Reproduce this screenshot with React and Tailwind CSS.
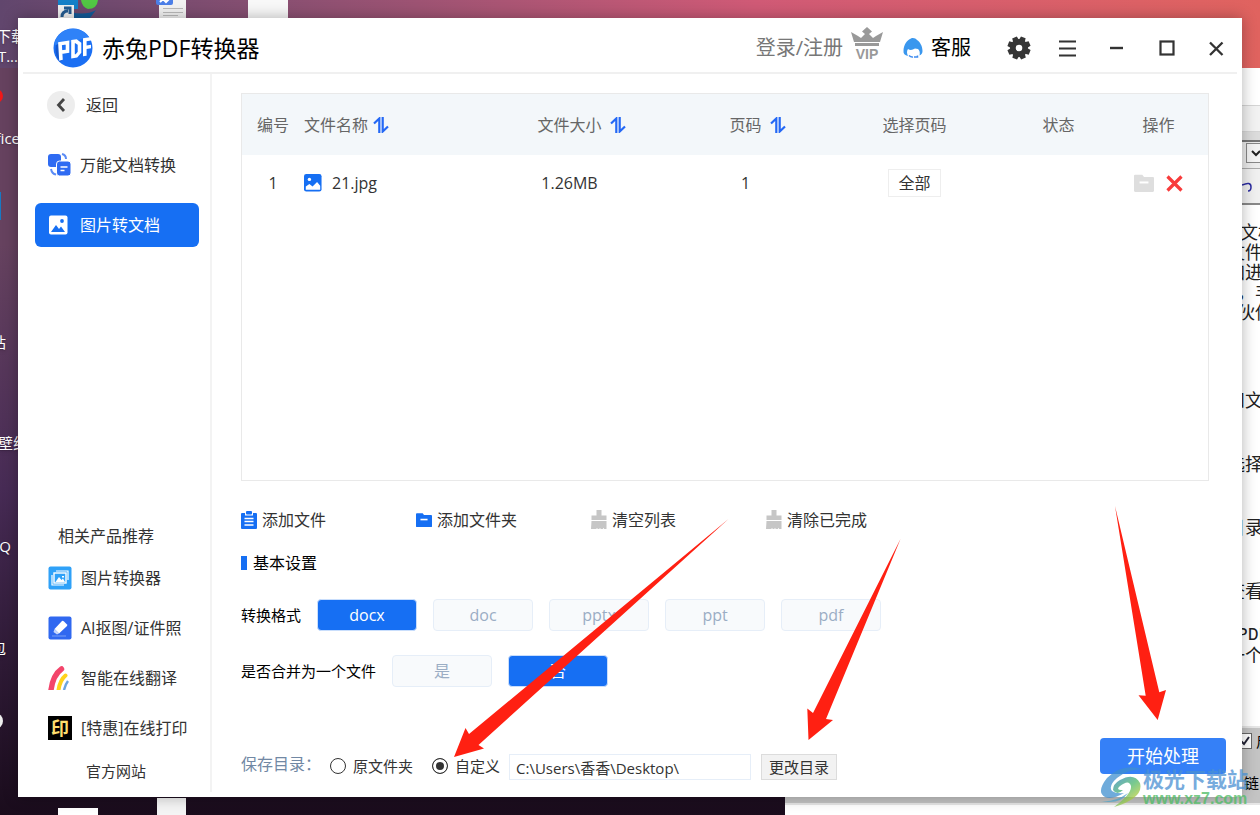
import React, { useState } from "react";

const FONT = "font-['Open_Sans','Noto_Sans_CJK_SC',sans-serif]";

const products = [
  { name: "图片转换器", Icon: PhotoIcon },
  { name: "AI抠图/证件照", Icon: EraserIcon },
  { name: "智能在线翻译", Icon: RainbowIcon },
  { name: "[特惠]在线打印", Icon: PrintIcon }
];

const formats = ["docx", "doc", "pptx", "ppt", "pdf"];

const files = [{ id: 1, name: "21.jpg", size: "1.26MB", pages: 1, range: "全部" }];

// left edge of the desktop, labels are cut by the window
const desktopLabels = [
  { text: "下载", className: "top-[26px] right-[-8px]" },
  { text: "T...", className: "top-[46px] right-0" },
  { text: "Office", className: "top-[128px] right-[-2px]" },
  { text: "站", className: "top-[332px] right-[12px]" },
  { text: "壁纸", className: "top-[433px] right-[-10px]" },
  { text: "QQ", className: "top-[536px] right-[7px]" },
  { text: "包", className: "top-[638px] right-[12px]" }
];

const docLines = [
  { text: "文档", className: "top-[222px] left-[1240px]" },
  { text: "文件", className: "top-[242px] left-[1227px]" },
  { text: "加进", className: "top-[262px] left-[1227px]" },
  { text: "，丰", className: "top-[282px] left-[1237px]" },
  { text: "伙伴", className: "top-[302px] left-[1237px]" },
  { text: "和文", className: "top-[390px] left-[1227px]" },
  { text: "选择", className: "top-[454px] left-[1227px]" },
  { text: "目录", className: "top-[517px] left-[1227px]" },
  { text: "查看", className: "top-[581px] left-[1227px]" },
  { text: "PDF", className: "top-[625px] left-[1237px] font-['Liberation_Mono',monospace]" },
  { text: "一个", className: "top-[645px] left-[1227px]" }
];

function Logo() {
  return (
    <svg width="40" height="40" viewBox="0 0 40 40">
      <circle cx="20" cy="20" r="19.5" fill="#1b6ff3" />
      <path d="M1 16 A19.5 19.5 0 0 1 36 9 L22 13 L4 18 Z" fill="#2f82f8" />
      <path d="M3 17 L7 15 L10 31 L7 34 Q1 27 3 17 Z" fill="#1458cf" />
      <g transform="skewY(-9)" fill="none" stroke="#fff" strokeWidth="3.6">
        <path d="M8 33.500 L7 16.800 H14.500 V25.500 H8.500" />
        <path d="M20 31.500 V16.800 H23 L26.500 20 V28.500 L23.500 31.500 Z" />
        <path d="M31.800 33 V16.800 H39.500 M32 24.500 H38" />
      </g>
    </svg>
  );
}

function VipIcon() {
  return (
    <svg width="32" height="34" viewBox="0 0 32 34">
      <g fill="#999">
        <path d="M0 5 L7 9 L10 11 L14 7 L11 4.500 L16 0 L21 4.500 L18 7 L22 11 L25 9 L32 5 L29 15 H3 Z" />
        <rect x="4" y="16" width="24" height="3" />
      </g>
      <text x="16" y="32" textAnchor="middle" fontSize="14" fontWeight="700" fill="#999" fontFamily="Liberation Sans">VIP</text>
    </svg>
  );
}

function ServiceIcon() {
  return (
    <svg width="20" height="22" viewBox="0 0 20 22">
      <path d="M0.500 14 C0.500 8 4 3 8 1.500 C10 0.500 13 1.500 14 3 C17 5 19.500 9 19.500 14 Q19.500 17 16.500 18.500 Q17.500 14 15 12 L12 11.500 Q8 14 5 12 Q3 15 5 19 Q0 18 0.500 14 Z" fill="#3a97ee" />
      <path d="M6 18.500 Q8 20.500 10 20 M14.500 18.500 V20 H11" fill="none" stroke="#3f8cf0" strokeWidth="1.500" />
    </svg>
  );
}

function GearIcon() {
  return (
    <svg width="24" height="24" viewBox="0 0 24 24">
      <g fill="#363636">
        {[0, 45, 90, 135, 180, 225, 270, 315].map(a => (
          <path key={a} d="M8.800 5 L9.500 0.500 H14.500 L15.200 5 Z" transform={`rotate(${a + 22} 12 12)`} />
        ))}
        <circle cx="12" cy="12" r="9" />
      </g>
      <circle cx="12" cy="12" r="3.300" fill="#fff" />
    </svg>
  );
}

function DocsIcon() {
  return (
    <svg width="24" height="24" viewBox="0 0 24 24">
      <rect x="0" y="1" width="13" height="13" rx="3" fill="#2f6bf2" />
      <rect x="8.500" y="8" width="14.500" height="15" rx="3" fill="#2f6bf2" stroke="#fff" strokeWidth="1" />
      <path d="M12.500 14 H19.500 M12.500 17.500 H16.500" stroke="#fff" strokeWidth="1.600" />
      <path d="M14 1 Q18 2 18 6 M3 16 Q4 21 8 21.500" fill="none" stroke="#5c8cf5" strokeWidth="2" />
    </svg>
  );
}

function ImageIcon({ size, color, inner }) {
  return (
    <svg width={size} height={size} viewBox="0 0 20 20">
      <rect x="0" y="0" width="19.500" height="19.500" rx="2.500" fill={color} />
      <circle cx="6" cy="6" r="1.900" fill={inner} />
      <path d="M2 17.500 V14 L6 11 L9.500 14 L14.500 9 L18 13 V17.500 Z" fill={inner} />
    </svg>
  );
}

function WhiteImageIcon() {
  return (
    <svg width="20" height="20" viewBox="0 0 20 20">
      <rect x="1" y="0.500" width="18.500" height="19" rx="2" fill="#fff" />
      <circle cx="14" cy="6" r="1.900" fill="#166ff3" />
      <path d="M3 17 L8 10 L11 14 L13 11.500 L17 17 Z" fill="#166ff3" />
    </svg>
  );
}

function PhotoIcon() {
  return (
    <svg width="24" height="24" viewBox="0 0 24 24">
      <rect x="0.500" y="0.500" width="23" height="23" rx="2" fill="#2fa1f8" />
      <path d="M8 5 H20 V14 M4 9 V19 H16" fill="none" stroke="#fff" strokeWidth="1.200" />
      <rect x="6" y="7" width="12" height="10" fill="none" stroke="#fff" strokeWidth="1.400" />
      <path d="M7.500 16 L11 11 L13.500 14 L15 12.500 L17 16 Z M14 10 h2 v1.500 h-2 Z" fill="#fff" />
    </svg>
  );
}

function EraserIcon() {
  return (
    <svg width="24" height="24" viewBox="0 0 24 24">
      <rect x="0.500" y="0.500" width="23" height="23" rx="2" fill="#3068f0" />
      <path d="M6.500 13 L14 5 Q15 4.500 16 5.500 L19 8.500 Q19.500 9.500 19 10 L11 17.500 Z" fill="#fff" />
      <path d="M6.500 13 L11 17.500 L9 18.500 L5.500 16 Z" fill="#c6d6fb" />
      <path d="M4 20 H18" stroke="#6d98f6" strokeWidth="1.200" />
    </svg>
  );
}

function RainbowIcon() {
  return (
    <svg width="24" height="24" viewBox="0 0 24 24" fill="none">
      <path d="M3 24 Q5 9 13.500 3" stroke="#f3456b" strokeWidth="5.500" strokeLinecap="round" />
      <path d="M10.500 24 Q12 14 17.500 9.500" stroke="#ffd21c" strokeWidth="4" strokeLinecap="round" />
      <path d="M16 24 Q17.500 18 20 15" stroke="#6da5de" strokeWidth="2.500" />
    </svg>
  );
}

function PrintIcon() {
  return (
    <span className="flex h-6 w-6 items-center justify-center bg-black text-[18px] leading-6 font-bold text-[#ffdf6e]">印</span>
  );
}

function SortIcon() {
  return (
    <svg width="16" height="16" viewBox="0 0 16 16" fill="none" stroke="#2468f5" strokeWidth="2.200">
      <path d="M1 6.500 L6.300 1.500 V16" />
      <path d="M9.700 0 V14.500 L15 9.500" />
    </svg>
  );
}

function FolderIcon({ size, color }) {
  return (
    <svg width={size} height={size} viewBox="0 0 18 18">
      <path d="M1 1.500 H7.500 L9 3.500 H17 Q18 3.500 18 4.500 V16 Q18 17 17 17 H1 Q0 17 0 16 V2.500 Q0 1.500 1 1.500 Z" fill={color} />
      <path d="M5 8.500 H13" stroke="#fff" strokeWidth="1.800" />
    </svg>
  );
}

function ClipboardIcon() {
  return (
    <svg width="16" height="18" viewBox="0 0 16 18">
      <path d="M1 2 H4 V4.500 H12 V2 H15 Q16 2 16 3 V17 Q16 18 15 18 H1 Q0 18 0 17 V3 Q0 2 1 2 Z" fill="#166ff3" />
      <rect x="5" y="0" width="6" height="3.500" rx="1" fill="#166ff3" />
      <path d="M3.500 7.500 H12.500 M3.500 10.500 H12.500 M3.500 14 H12.500" stroke="#fff" strokeWidth="1.400" />
    </svg>
  );
}

function BrushIcon() {
  return (
    <svg width="16" height="20" viewBox="0 0 16 20" fill="#c6c6c6">
      <path d="M5.500 0 H10.500 V5.500 H15.500 V10 H0.500 V5.500 H5.500 Z" />
      <path d="M0.500 11 H15.500 V19 H13.200 L12.500 17.800 L11.800 19 H9.700 L9 17.800 L8.300 19 H6.700 L6 17.800 L5.300 19 H0 Z" />
    </svg>
  );
}

const actions = [
  { name: "添加文件", icon: <ClipboardIcon /> },
  { name: "添加文件夹", icon: <FolderIcon size={16} color="#166ff3" /> },
  { name: "清空列表", icon: <BrushIcon /> },
  { name: "清除已完成", icon: <BrushIcon /> }
];

function OptionButton({ active, onClick, children }) {
  return (
    <button
      onClick={onClick}
      className={`h-8 w-[100px] rounded-[4px] border text-[16px] leading-5 ${
        active
          ? "border-[#c9defc] bg-[#166ff3] text-white"
          : "border-[#e6eef8] bg-[#f8fafc] text-[#9badc4]"
      }`}
    >
      {children}
    </button>
  );
}

function Desktop() {
  return (
    <div className="absolute inset-0 overflow-hidden bg-linear-to-b from-[#66425f] from-30% via-[#472b55] via-60% to-[#1a0c1c]" aria-hidden="true">
      <div className="absolute inset-x-0 top-0 h-[68px] bg-linear-to-r from-[#61466d] via-[#d05a76] via-60% to-[#e0635f]"></div>
      <svg className="absolute top-0 left-[56px]" width="240" height="18" viewBox="0 0 240 18">
        <rect x="2" y="0" width="20" height="9" fill="#1580c8" />
        <path d="M14 12 Q30 16 40 10 L34 18 H14 Z" fill="#135a98" />
        <path d="M25 0 H42 Q41 9 32 9 Q26 7 25 0 Z" fill="#52c744" />
        <rect x="2" y="5" width="16" height="13" fill="#f0f0f0" />
        <path d="M6 17 Q6 11 12 11 M8 8 H14 V14" fill="none" stroke="#245c91" strokeWidth="3" />
        <rect x="103" y="0" width="27" height="18" fill="#f2f2f2" />
        <rect x="100" y="-4" width="17" height="9" rx="2" fill="#4c7fe8" />
        <path d="M104 2 L107 -1 L110 2 L113 -1" fill="none" stroke="#fff" strokeWidth="2" />
        <path d="M107 8.500 H127 M107 12.500 H127 M107 15.500 H122" stroke="#bbb" />
        <rect x="192" y="0" width="40" height="18" fill="#f8f8f8" />
      </svg>
      <div className="absolute bottom-0 left-[58px] h-[7px] w-[40px] bg-white"></div>
      <div className="absolute bottom-0 left-[157px] h-[17px] w-[29px] bg-[#f4f4f4]"></div>
      <div className="absolute top-[89px] left-[-11px] h-[14px] w-[14px] rounded-full bg-[#f01818]"></div>
      <div className="absolute top-[192px] left-0 h-[28px] w-px bg-[#1679c4]"></div>
      <div className="absolute top-[713px] left-[-13px] h-4 w-4 rounded-full bg-[#eee]"></div>
      <div className="absolute inset-y-0 left-0 w-[18px] overflow-hidden">
        {desktopLabels.map(l => (
          <span key={l.text} className={`absolute text-[15px] leading-5 whitespace-nowrap text-white text-shadow-md ${l.className}`}>
            {l.text}
          </span>
        ))}
      </div>

      {/* document window behind */}
      <div className="absolute top-[68px] right-0 bottom-0 left-[785px] bg-white">
        <div className="mt-[37px] h-[27px] border-y border-[#d5d5d5] bg-[#f2f2f2]"></div>
        <div className="h-[10px] border-b-2 border-[#777] bg-[#dcdcdc]"></div>
        <div className="flex h-[26px] justify-end bg-[#ececec] pt-px">
          <svg width="14" height="20" viewBox="0 0 14 20">
            <rect x="0.500" y="0.500" width="20" height="19" fill="#f4f4f4" stroke="#888" />
            <path d="M6 8 L10 12 L14 8" fill="none" stroke="#222" strokeWidth="2" />
          </svg>
        </div>
        <div className="flex h-[37px] justify-end border-t border-b-2 border-t-[#aaa] border-b-[#888] bg-[#f0f0f0] pt-[12px]">
          <svg width="18" height="14" viewBox="0 0 18 14">
            <path d="M0 4 Q9 0 9 6 Q9 10 6 10" fill="none" stroke="#2a2aa0" strokeWidth="1.500" />
          </svg>
        </div>
        <div className="absolute inset-x-0 top-[658px] bottom-[10px] border-y-2 border-[#e6e6e6] bg-[#c4c4c4]"></div>
      </div>
      {docLines.map(l => (
        <span key={l.text} className={`absolute text-[18px] leading-5 whitespace-nowrap text-[#222] ${l.className}`}>
          {l.text}
        </span>
      ))}
      <svg className="absolute top-[733px] left-[1236px]" width="16" height="16" viewBox="0 0 16 16">
        <rect x="0.500" y="0.500" width="15" height="15" fill="#fff" stroke="#666" />
        <path d="M5 8 L8 11 L13 4" fill="none" stroke="#223" strokeWidth="2" />
      </svg>
      <span className="absolute top-[731px] left-[1256px] text-[15px] leading-5 text-black">启</span>
      <span className="absolute top-[773px] left-[1244px] text-[15px] leading-5 text-black">链</span>
    </div>
  );
}

function TitleBar() {
  return (
    <header className="mx-[5px] flex h-14 items-center border-b-2 border-[#f0f0f0] pt-[6px] pr-[13px] pl-[30px]">
      <Logo />
      <h1 className="ml-[9px] text-[23px] leading-7 text-black">赤兔PDF转换器</h1>
      <div className="ml-auto flex items-center">
        <a href="#login" className="text-[20px] leading-6 text-[#777]">登录/注册</a>
        <button className="ml-2 -mt-2" aria-label="VIP"><VipIcon /></button>
        <a href="#service" className="ml-5 flex items-center gap-2 text-[20px] leading-6 text-black">
          <ServiceIcon />
          客服
        </a>
        <button className="ml-[36px]" aria-label="设置"><GearIcon /></button>
        <button className="ml-[27px]" aria-label="菜单">
          <svg width="20" height="18" viewBox="0 0 20 18">
            <path d="M1 2.500 H18 M1 9.500 H18 M1 16.500 H18" stroke="#333" strokeWidth="2.200" />
          </svg>
        </button>
        <button className="ml-8" aria-label="最小化">
          <svg width="14" height="18" viewBox="0 0 14 18">
            <path d="M0 9 H13" stroke="#333" strokeWidth="2.400" />
          </svg>
        </button>
        <button className="ml-[35px]" aria-label="最大化">
          <svg width="16" height="18" viewBox="0 0 16 18">
            <rect x="1.500" y="2.500" width="13" height="13" fill="none" stroke="#333" strokeWidth="2.200" />
          </svg>
        </button>
        <button className="ml-[33px]" aria-label="关闭">
          <svg width="16" height="18" viewBox="0 0 16 18">
            <path d="M2 3.500 L14.500 16 M14.500 3.500 L2 16" stroke="#333" strokeWidth="2.300" />
          </svg>
        </button>
      </div>
    </header>
  );
}

function Sidebar() {
  return (
    <aside className="mb-[5px] flex w-[194px] shrink-0 flex-col border-r-2 border-[#f3f3f3] pt-[9px] text-[16px] leading-5 text-[#333]">
      <nav className="flex flex-col gap-4 pr-[11px] pl-[17px]">
        <button className="flex h-11 items-center gap-[11px] pl-3">
          <svg width="28" height="28" viewBox="0 0 28 28">
            <circle cx="14" cy="14" r="14" fill="#ededed" />
            <path d="M17 8 L11.500 14 L17 20" fill="none" stroke="#444" strokeWidth="2.800" />
          </svg>
          返回
        </button>
        <button className="flex h-11 items-center gap-2 pl-[13px]">
          <DocsIcon />
          万能文档转换
        </button>
        <button className="flex h-11 items-center gap-3 rounded-md bg-[#166ff3] pl-[13px] text-white">
          <WhiteImageIcon />
          图片转文档
        </button>
      </nav>
      <div className="mt-auto pb-[3px]">
        <h2 className="h-[34px] pl-10 leading-[34px]">相关产品推荐</h2>
        <ul>
          {products.map(({ name, Icon }) => (
            <li key={name}>
              <a href="#product" className="flex h-[50px] items-center gap-[9px] pl-[30px] whitespace-nowrap">
                <Icon />
                {name}
              </a>
            </li>
          ))}
        </ul>
        <a href="#site" className="block pl-[68px] text-[15px] leading-9">官方网站</a>
      </div>
    </aside>
  );
}

function FileTable() {
  return (
    <div className="mr-[17px] flex-1 border border-[#e9e9e9]">
      <table className="w-full table-fixed text-[16px] leading-5 text-[#333]">
        <colgroup>
          <col className="w-[62px]" />
          <col className="w-[177px]" />
          <col className="w-[201px]" />
          <col className="w-[151px]" />
          <col className="w-[163px]" />
          <col className="w-[125px]" />
          <col className="w-[75px]" />
          <col className="w-[12px]" />
        </colgroup>
        <thead>
          <tr className="h-[61px] bg-[#f3f7fa] text-[#666]">
            <th className="font-normal">编号</th>
            <th className="font-normal">
              <div className="flex items-center gap-[5px]">文件名称<SortIcon /></div>
            </th>
            <th className="font-normal">
              <div className="flex items-center justify-center gap-2">文件大小<SortIcon /></div>
            </th>
            <th className="font-normal">
              <div className="flex items-center justify-center gap-2">页码<SortIcon /></div>
            </th>
            <th className="font-normal">选择页码</th>
            <th className="font-normal">状态</th>
            <th className="font-normal">操作</th>
            <th></th>
          </tr>
        </thead>
        <tbody>
          {files.map(f => (
            <tr key={f.id} className="h-14 text-center">
              <td>{f.id}</td>
              <td>
                <div className="flex items-center gap-[10px]">
                  <ImageIcon size={18} color="#166ff3" inner="#fff" />
                  {f.name}
                </div>
              </td>
              <td className="pr-6">{f.size}</td>
              <td className="pr-6">{f.pages}</td>
              <td>
                <button className="h-7 w-[53px] border border-[#eee]">{f.range}</button>
              </td>
              <td></td>
              <td>
                <div className="flex items-center justify-center gap-3">
                  <button aria-label="打开文件夹"><FolderIcon size={20} color="#dedede" /></button>
                  <button aria-label="删除">
                    <svg width="17" height="17" viewBox="0 0 17 17">
                      <path d="M1.500 1.500 L15.500 15.500 M15.500 1.500 L1.500 15.500" stroke="#f83c3c" strokeWidth="3.200" />
                    </svg>
                  </button>
                </div>
              </td>
              <td></td>
            </tr>
          ))}
        </tbody>
      </table>
    </div>
  );
}

function Arrows() {
  return (
    <svg className="pointer-events-none absolute top-0 left-0" width="1260" height="815" viewBox="0 0 1260 815" fill="#ff2012" aria-hidden="true">
      <path d="M454 757 L465.500 728 L469 734 L728.500 519 L478.500 745 L484 748.500 Z" />
      <path d="M808.500 740 L807.300 708.500 L813 713 L900.500 539 L826 719 L833 720 Z" />
      <path d="M1157.700 720 L1138.500 695.300 L1145.700 695.700 L1115 506 L1159.300 692.300 L1166 690 Z" />
    </svg>
  );
}

function Watermark() {
  return (
    <div className="pointer-events-none absolute right-3 bottom-[7px] flex items-center opacity-75" aria-hidden="true">
      <svg width="43" height="42" viewBox="0 0 43 42">
        <defs>
          <linearGradient id="swirl" x1="0" y1="0" x2="0.700" y2="1">
            <stop offset="0" stopColor="#2a7fc4" />
            <stop offset="0.500" stopColor="#4cb86a" />
            <stop offset="1" stopColor="#d9d52c" />
          </linearGradient>
        </defs>
        <path d="M42 3 Q22 -3 7 12 Q-4 26 5 31 Q12 34 24 27 Q16 28 12 25 Q8 20 17 12 Q26 4 42 3 Z" fill="#3f8fcf" />
        <path d="M20 14 Q34 6 40 17 Q44 32 14 41 Q32 28 31 20 Q29 13 20 20 Q15 24 23 24 Q17 30 13 24 Q13 18 20 14 Z" fill="url(#swirl)" />
        <path d="M0 35 Q14 37 28 27 Q20 39 0 35 Z" fill="#4fa3c8" />
      </svg>
      <div className="flex flex-col">
        <span className="text-[21px] leading-6 font-bold text-[#4a90d2]">极光下载站</span>
        <span className="font-['Liberation_Sans',sans-serif] text-[16px] leading-4 font-bold text-[#4dbb63]">www.xz7.com</span>
      </div>
    </div>
  );
}

export default function App() {
  const [format, setFormat] = useState("docx");
  const [merge, setMerge] = useState(false);
  const [target, setTarget] = useState("custom");
  const [path, setPath] = useState("C:\\Users\\香香\\Desktop\\");

  return (
    <div className={`relative flex min-h-screen overflow-hidden p-[18px] ${FONT}`}>
      <Desktop />
      <div className="relative flex flex-1 flex-col bg-white shadow-[0_0_14px_rgba(0,0,0,0.3)]">
        <TitleBar />
        <div className="flex flex-1">
          <Sidebar />
          <main className="flex min-w-0 flex-1 flex-col pt-[19px] pr-4 pb-[17px] pl-[29px]">
            <FileTable />

            <div className="mt-[27px] grid grid-cols-[175px_175px_175px_175px] text-[16px] leading-6 text-[#333]">
              {actions.map(a => (
                <button key={a.name} className="flex items-center gap-[5px]">
                  {a.icon}
                  {a.name}
                </button>
              ))}
            </div>

            <h2 className="mt-[19px] flex items-center gap-[6px] text-[16px] leading-6 text-black">
              <span className="h-[14px] w-[6px] bg-[#166ff3]"></span>
              基本设置
            </h2>

            <div className="mt-6 flex items-center gap-4">
              <span className="text-[15px] leading-5 text-black">转换格式</span>
              {formats.map(f => (
                <OptionButton key={f} active={format === f} onClick={() => setFormat(f)}>
                  {f}
                </OptionButton>
              ))}
            </div>

            <div className="mt-6 flex items-center gap-4">
              <span className="text-[15px] leading-5 text-black">是否合并为一个文件</span>
              <OptionButton active={merge} onClick={() => setMerge(true)}>是</OptionButton>
              <OptionButton active={!merge} onClick={() => setMerge(false)}>否</OptionButton>
            </div>

            <div className="mt-[51px] flex h-[42px] items-start justify-between">
              <div className="flex items-start self-end text-[15px] text-[#333]">
                <span className="w-[89px] text-[16px] leading-5 text-[#7188a4]">保存目录：</span>
                <label className="flex w-[102px] items-center gap-[7px] leading-6">
                  <input
                    type="radio"
                    name="target"
                    checked={target === "source"}
                    onChange={() => setTarget("source")}
                    className="h-4 w-4 appearance-none rounded-full border border-[#333] bg-white checked:bg-[#333] checked:inset-ring-[3px] checked:inset-ring-white"
                  />
                  原文件夹
                </label>
                <label className="flex w-[77px] items-center gap-[7px] leading-6">
                  <input
                    type="radio"
                    name="target"
                    checked={target === "custom"}
                    onChange={() => setTarget("custom")}
                    className="h-4 w-4 appearance-none rounded-full border border-[#333] bg-white checked:bg-[#333] checked:inset-ring-[3px] checked:inset-ring-white"
                  />
                  自定义
                </label>
                <input
                  type="text"
                  aria-label="保存目录"
                  value={path}
                  onChange={e => setPath(e.target.value)}
                  className="h-[26px] w-[242px] border border-[#e6eef8] px-[6px]"
                />
                <button className="ml-[10px] h-[26px] w-[76px] border border-[#dcdcdc] bg-[#f2f2f2] leading-5">更改目录</button>
              </div>
              <button className="h-9 w-[126px] rounded-[4px] bg-[#3580f7] text-[18px] leading-6 text-white">开始处理</button>
            </div>
          </main>
        </div>
      </div>
      <Arrows />
      <Watermark />
    </div>
  );
}
